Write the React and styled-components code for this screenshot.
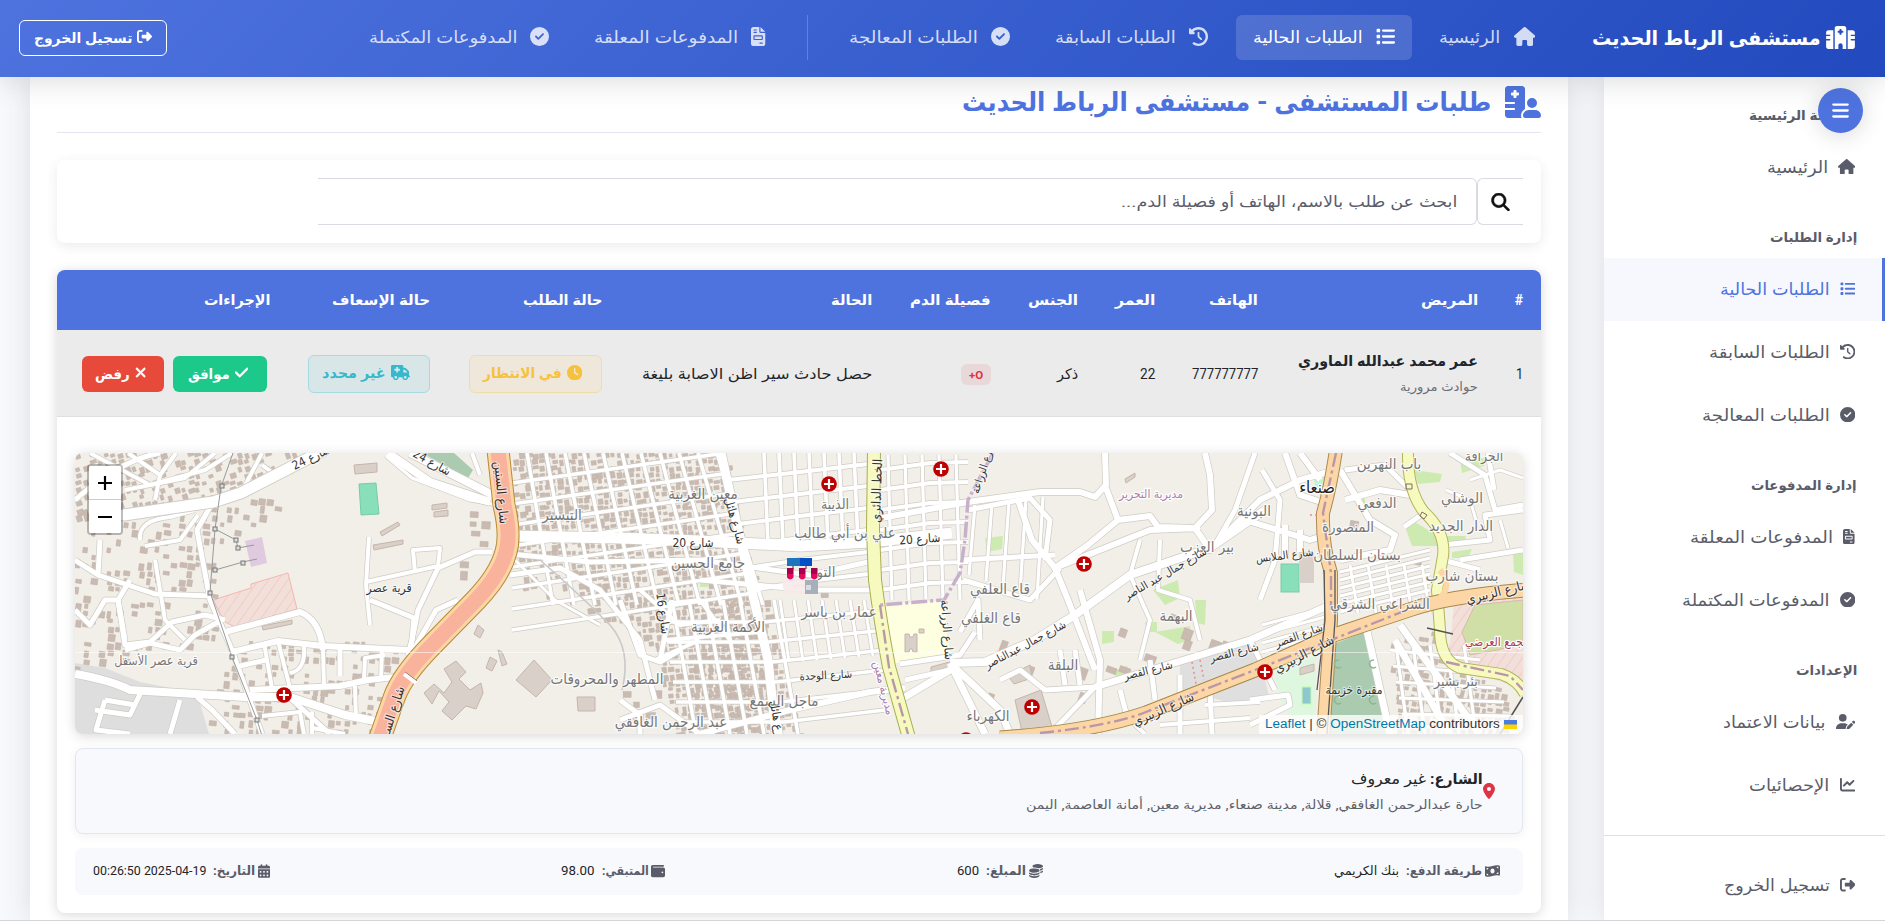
import React, { useLayoutEffect, useRef, useState } from 'react';
import styled, { createGlobalStyle, css } from 'styled-components';
import {
  FaHospital, FaHouse, FaList, FaClockRotateLeft, FaCircleCheck, FaFileInvoice,
  FaRightFromBracket, FaBars, FaHospitalUser, FaMagnifyingGlass, FaClock,
  FaTruckMedical, FaCheck, FaXmark, FaLocationDot, FaMoneyBillWave, FaCoins,
  FaWallet, FaCalendarDays, FaUserPen, FaChartLine,
} from 'react-icons/fa6';

const arabic = "Roboto, 'DejaVu Sans Condensed', 'DejaVu Sans', sans-serif";

const GlobalStyle = createGlobalStyle`
  * { box-sizing: border-box; }
  html, body { margin: 0; padding: 0; }
  body { background: #f8f9fc; font-family: ${arabic}; color: #212529; overflow: hidden; }
  svg { display: block; flex: none; }
`;

/* ---------- text that keeps a given line width ---------- */
const FitBox = styled.span`
  display: inline-block;
  flex: none;
  width: ${(p) => p.$w}px;
  white-space: nowrap;
  text-align: right;
`;
const FitInner = styled.span`
  display: inline-block;
  transform-origin: 100% 50%;
`;
function Fit({ w, children }) {
  const ref = useRef(null);
  const [scale, setScale] = useState(1);
  useLayoutEffect(() => {
    if (ref.current) setScale(w / ref.current.offsetWidth);
  }, [w, children]);
  return (
    <FitBox $w={w}>
      <FitInner ref={ref} style={{ transform: `scaleX(${scale})` }}>{children}</FitInner>
    </FitBox>
  );
}

/* width of each glyph relative to its height */
const ratios = new Map([
  [FaHouse, 1.125], [FaList, 1], [FaClockRotateLeft, 1], [FaCircleCheck, 1],
  [FaFileInvoice, 0.75], [FaUserPen, 1.25], [FaChartLine, 1], [FaRightFromBracket, 1],
  [FaClock, 1], [FaTruckMedical, 1.25], [FaCheck, 0.875], [FaXmark, 0.75],
]);
const Glyph = styled.span`
  flex: none;
  width: ${(p) => p.$size * p.$ratio}px;
  height: ${(p) => p.$size}px;
  margin-bottom: 2px;
  svg { width: 100%; height: 100%; }
`;
const Icon = ({ of: Shape, size }) => (
  <Glyph $size={size} $ratio={ratios.get(Shape)}><Shape /></Glyph>
);

/* ---------- page frame ---------- */
const Page = styled.div`
  direction: rtl;
  display: flex;
  flex-direction: column;
  height: 921px;
  overflow: hidden;
  border-bottom: 1px solid #d3d4d8;
`;
const TopBar = styled.header`
  flex: none;
  height: 77px;
  display: flex;
  align-items: center;
  padding: 0 30px 2px 19px;
  position: relative;
  z-index: 3;
  color: #fff;
  background: linear-gradient(135deg, #4e73df 0%, #224abe 100%);
  box-shadow: 0 4px 28px rgba(58, 59, 69, 0.18);
`;
const Brand = styled.div`
  display: flex;
  align-items: center;
  gap: 5px;
  font-size: 20px;
  font-weight: 700;
  margin-left: 40px;
  svg { width: 29px; height: 23px; }
`;
const Nav = styled.nav`
  display: flex;
  align-items: center;
  gap: 11px;
  flex: 1;
`;
const NavItem = styled.a`
  display: flex;
  align-items: center;
  gap: 13px;
  height: 45px;
  padding: 0 17px;
  border-radius: 6px;
  font-size: 16.5px;
  color: ${(p) => (p.$active ? '#fff' : 'rgba(255,255,255,.8)')};
  background: ${(p) => (p.$active ? 'rgba(255,255,255,.15)' : 'transparent')};
`;
const NavDivider = styled.span`
  width: 1px;
  height: 45px;
  margin: 0 13px;
  background: rgba(255, 255, 255, 0.2);
`;
const LogoutButton = styled.button`
  display: flex;
  align-items: center;
  gap: 5px;
  width: 148px;
  height: 36px;
  padding: 0 14px;
  border: 1px solid #fff;
  border-radius: 6px;
  background: transparent;
  color: #fff;
  font: 700 14px ${arabic};
`;
const Body = styled.div`
  flex: 1;
  min-height: 0;
  display: flex;
`;

/* ---------- sidebar ---------- */
const Sidebar = styled.aside`
  position: relative;
  width: 281px;
  flex: none;
  background: #fff;
  box-shadow: 0 2px 28px rgba(58, 59, 69, 0.15);
`;
const SideHeading = styled.div`
  height: 59px;
  padding: 26px 28px 0 0;
  font-size: 13.5px;
  line-height: 24px;
  font-weight: 700;
  color: #5a5c69;
`;
const SideItem = styled.a`
  display: flex;
  align-items: center;
  gap: 10px;
  height: 63px;
  padding-right: ${(p) => (p.$active ? 27 : 30)}px;
  font-size: 16.5px;
  color: ${(p) => (p.$active ? '#4e73df' : '#5a5c69')};
  background: ${(p) => (p.$active ? '#f6f8fe' : 'transparent')};
  border-right: ${(p) => (p.$active ? '3px solid #4e73df' : '0')};
`;
const SideRule = styled.hr`
  border: 0;
  border-top: 1px solid #dedfe3;
  margin: 18px 0 18px;
`;
const MenuToggle = styled.button`
  position: absolute;
  z-index: 2;
  top: 11px;
  right: 22px;
  width: 45px;
  height: 45px;
  border: 0;
  border-radius: 50%;
  display: flex;
  align-items: center;
  justify-content: center;
  color: #fff;
  background: #4e73df;
  box-shadow: 0 2px 22px rgba(58, 59, 69, 0.2);
  svg { width: 17px; height: 19px; }
`;

/* ---------- main column ---------- */
const Main = styled.main`
  width: 1538px;
  flex: none;
  margin-right: 36px;
  padding: 0 27px;
  background: #fff;
  box-shadow: 0 2px 28px rgba(58, 59, 69, 0.15);
`;
const TitleRow = styled.h1`
  display: flex;
  align-items: center;
  gap: 14px;
  height: 56px;
  margin: 0;
  padding-bottom: 5px;
  border-bottom: 1px solid #e3e6f0;
  color: #4e73df;
  font-size: 26px;
  font-weight: 700;
  svg { width: 36px; height: 32px; }
`;
const SearchCard = styled.section`
  margin-top: 27px;
  height: 83px;
  padding: 18px;
  display: flex;
  border-radius: 8px;
  box-shadow: 0 3px 12px rgba(58, 59, 69, 0.1);
`;
const SearchButton = styled.button`
  width: 46px;
  height: 47px;
  padding: 0 13px 0 0;
  display: flex;
  align-items: center;
  color: #111;
  background: #fff;
  border: 1px solid #d9dbe2;
  border-right: 0;
  border-radius: 6px 0 0 6px;
  svg { width: 19px; height: 18px; stroke: currentColor; stroke-width: 14px; }
`;
const SearchField = styled.div`
  width: 1159px;
  height: 47px;
  padding-right: 19px;
  display: flex;
  align-items: center;
  font-size: 15.5px;
  color: #5a5c69;
  border: 1px solid #d9dbe2;
  border-left: 0;
  border-radius: 0 6px 6px 0;
`;
const TableCard = styled.section`
  margin-top: 27px;
  height: 643px;
  border-radius: 8px;
  overflow: hidden;
  box-shadow: 0 2px 12px rgba(58, 59, 69, 0.2);
`;
const Row = styled.div`
  display: grid;
  grid-template-columns: 45px 220px 103px 77px 87px 119px 270px 172px 160px 231px;
  align-items: center;
  ${(p) => (p.$head ? css`
    height: 60px;
    background: #4e73df;
    color: #fff;
    font-size: 14px;
    font-weight: 700;
  ` : css`
    height: 87px;
    background: #ebebeb;
    border-bottom: 1px solid #dddfe2;
    font-size: 14.5px;
    padding-top: 1px;
  `)}
`;
const Cell = styled.div`
  display: flex;
  align-items: center;
  gap: 9px;
  padding-top: ${(p) => (p.$plain ? 2 : 0)}px;
  padding-right: ${(p) => (p.$inset ? 21 : 18)}px;
`;
const Patient = styled(Cell)`
  flex-direction: column;
  align-items: flex-start;
  gap: 3px;
`;
const PatientName = styled.strong`
  font-size: 15px;
  line-height: 24px;
`;
const PatientKind = styled.span`
  font-size: 12.5px;
  line-height: 22px;
  color: #6c6d75;
`;
const BloodBadge = styled.span`
  width: 30px;
  height: 21px;
  border-radius: 6px;
  display: flex;
  align-items: center;
  justify-content: center;
  font-size: 11.5px;
  font-weight: 700;
  color: #dc3545;
  background: #e9d8da;
`;
const tones = {
  warning: ['#f6c23e', '#eee7da', '#f0dda6'],
  info: ['#36b9cc', '#d9e6e8', '#a4dae2'],
};
const StatusBadge = styled.span`
  width: ${(p) => p.$w}px;
  height: 38px;
  padding-right: 19px;
  display: flex;
  align-items: center;
  gap: 5px;
  border-radius: 6px;
  font-size: 14.5px;
  font-weight: 700;
  color: ${(p) => tones[p.$tone][0]};
  background: ${(p) => tones[p.$tone][1]};
  border: 1px solid ${(p) => tones[p.$tone][2]};
`;
const ActionButton = styled.button`
  width: ${(p) => p.$w}px;
  height: 36px;
  padding: 0 ${(p) => p.$pad}px 0 0;
  display: flex;
  align-items: center;
  gap: 5px;
  border: 0;
  border-radius: 6px;
  color: #fff;
  font: 700 14px ${arabic};
  background: ${(p) => p.$color};
  svg { stroke: currentColor; stroke-width: 16px; }
`;
const Details = styled.div`
  padding: 36px 18px 0;
  display: flex;
  flex-direction: column;
`;
const AddressBox = styled.div`
  margin-top: 14px;
  height: 86px;
  padding: 0 27px 0 0;
  display: flex;
  align-items: center;
  border: 1px solid #e3e6f0;
  border-radius: 8px;
  background: #f8f9fc;
  box-shadow: 0 2px 8px rgba(58, 59, 69, 0.08);
  > svg { width: 12px; height: 16px; color: #dc3545; }
`;
const AddressLines = styled.div`
  display: flex;
  flex-direction: column;
  padding-top: 2px;
`;
const AddressLine = styled.div`
  display: flex;
  gap: 4px;
  font-size: ${(p) => (p.$small ? 12.5 : 15)}px;
  line-height: 25px;
  color: ${(p) => (p.$small ? '#5f6168' : '#212529')};
`;
const InfoBar = styled.div`
  margin-top: 14px;
  height: 47px;
  padding: 0 23px 2px 18px;
  display: flex;
  align-items: center;
  justify-content: space-between;
  border-radius: 8px;
  background: #f8f9fc;
`;
const InfoItem = styled.div`
  display: flex;
  align-items: center;
  gap: 3px;
  font-size: 12.5px;
  > svg { height: 14px; width: ${(p) => p.$icon}px; color: #5a5c69; }
  strong { color: #5a5c69; margin-left: 4px; }
`;

/* ---------- map ---------- */
const MapFrame = styled.div`
  position: relative;
  direction: ltr;
  height: 281px;
  border-radius: 8px;
  overflow: hidden;
  background: #f2efe9;
`;
const MapShadow = styled.div`
  border-radius: 8px;
  box-shadow: 0 2px 12px rgba(58, 59, 69, 0.2);
`;
const ZoomControl = styled.div`
  position: absolute;
  left: 12px;
  top: 11px;
  width: 36px;
  height: 71px;
  display: flex;
  flex-direction: column;
  border: 2px solid rgba(0, 0, 0, 0.25);
  background-clip: padding-box;
  border-radius: 4px;
  overflow: hidden;
`;
const ZoomButton = styled.button`
  flex: 1;
  border: 0;
  padding: 0;
  display: flex;
  align-items: center;
  justify-content: center;
  background: #fff;
  color: #000;
  &:first-child { border-bottom: 1px solid #ccc; }
`;
const Attribution = styled.div`
  position: absolute;
  right: 0;
  bottom: 0;
  height: 19px;
  padding: 0 6px;
  display: flex;
  align-items: center;
  gap: 4px;
  background: rgba(255, 255, 255, 0.8);
  font: 12px/19px 'Liberation Sans', Arial, sans-serif;
  color: #333;
  a { color: #0078a8; }
`;

const rng = (seed) => () => {
  seed = (seed * 16807) % 2147483647;
  return seed / 2147483647;
};
const inside = (x, y, poly) => {
  let hit = false;
  for (let i = 0, j = poly.length - 1; i < poly.length; j = i++) {
    const [xi, yi] = poly[i];
    const [xj, yj] = poly[j];
    if (yi > y !== yj > y && x < ((xj - xi) * (y - yi)) / (yj - yi) + xi) hit = !hit;
  }
  return hit;
};
/* [polygon, density, step, tilt] */
const districts = [
  [[[75, 453], [300, 453], [215, 497], [75, 520]], 0.72, 7, -18],
  [[[75, 525], [215, 507], [270, 490], [284, 500], [225, 545], [215, 600], [225, 640], [75, 668]], 0.42, 8, 8],
  [[[235, 640], [400, 642], [372, 734], [200, 734]], 0.45, 8, 6],
  [[[512, 453], [724, 453], [760, 605], [778, 734], [675, 734], [655, 650], [610, 600], [560, 570], [514, 560]], 0.95, 6.5, -8],
  [[[560, 570], [514, 560], [520, 585], [590, 612], [640, 640], [640, 590]], 0.5, 8, -8],
  [[[700, 600], [768, 600], [800, 734], [680, 734]], 0.85, 7, -5],
  [[[465, 500], [495, 510], [495, 550], [440, 590], [455, 540]], 0.25, 10, 3],
  [[[1390, 640], [1438, 630], [1450, 670], [1500, 685], [1518, 734], [1395, 734]], 0.8, 7, 10],
  [[[960, 620], [1250, 600], [1260, 655], [1000, 720], [950, 700]], 0.07, 13, 20],
  [[[760, 460], [865, 460], [868, 600], [780, 600]], 0.03, 12, 0],
  [[[620, 690], [672, 690], [680, 734], [600, 734]], 0.25, 11, 0],
  [[[1350, 455], [1520, 455], [1520, 580], [1350, 600]], 0.02, 13, 10],
];
const buildings = districts.flatMap(([poly, density, step, tilt], k) => {
  const r = rng(97 + k * 131);
  const xs = poly.map((p) => p[0]);
  const ys = poly.map((p) => p[1]);
  const out = [];
  for (let y = Math.min(...ys); y < Math.max(...ys); y += step) {
    for (let x = Math.min(...xs); x < Math.max(...xs); x += step) {
      const px = x + r() * 2;
      const py = y + r() * 2;
      const keep = r() < density;
      const w = step * (0.4 + r() * 0.5);
      const h = step * (0.4 + r() * 0.5);
      if (keep && inside(px, py, poly)) out.push([px, py, w, h, tilt]);
    }
  }
  return out;
});

const streets = [];
const addStreet = (d, w = 4) => streets.push([d, w]);
for (let i = 0; i < 11; i++) addStreet(`M${527 + i * 19},453 l${26 + i * 2},152`, 3.6);
for (let i = 0; i < 7; i++) addStreet(`M${672 + i * 17},600 l24,134`, 3.6);
for (let i = 0; i < 8; i++) addStreet(`M512,${483 + i * 21} L${725 + i * 4},${453 + i * 20}`, 3.6);
for (let i = 0; i < 6; i++) addStreet(`M${664 + i * 3},${622 + i * 20} L${764 + i * 4},${622 + i * 20} L885,${610 + i * 20}`, 3.6);
for (let i = 0; i < 7; i++) addStreet(`M${764 + i * 15},453 l4,90`, 3.6);
for (let i = 0; i < 8; i++) addStreet(`M${780 + i * 14},600 l9,${62 - i}`, 3);
for (let i = 0; i < 6; i++) addStreet(`M${728 + i * 5},${480 + i * 22} L800,${472 + i * 22} L868,${464 + i * 22}`, 4);
for (let i = 0; i < 7; i++) addStreet(`M880,${470 + i * 20} L930,${463 + i * 20} L968,${462 + i * 20}`, 4);
for (let i = 0; i < 5; i++) addStreet(`M${888 + i * 17},455 l4,145`, 3.2);
for (let i = 0; i < 5; i++) addStreet(`M${975 + i * 17},${505 - i * 2} l-6,${70 + i * 8}`, 3.2);
for (let i = 0; i < 6; i++) addStreet(`M${1340},${612 - i * 8} L1430,${590 - i * 8}`, 3);
for (let i = 0; i < 5; i++) addStreet(`M${1350 + i * 18},565 l8,48`, 3);
for (let i = 0; i < 5; i++) addStreet(`M1262,${625 + i * 9} L1325,${608 + i * 9}`, 3);
for (let i = 0; i < 5; i++) addStreet(`M${1390 + i * 3},${650 + i * 16} L${1480 + i * 8},${660 + i * 14}`, 3.2);
for (let i = 0; i < 5; i++) addStreet(`M${1396 + i * 17},645 l12,89`, 3.2);
[
  ['M75,500 Q120,460 160,453', 5], ['M90,453 L150,485 L205,470 L232,453', 4],
  ['M128,453 L160,475 L155,500', 4], ['M176,453 L160,475 M125,490 L185,478 L215,453', 4],
  ['M213,502 L197,530 L210,600 L232,650 L262,734', 5], ['M241,493 L262,453 M262,465 L280,478', 4],
  ['M140,540 Q138,520 170,517 L195,510 M145,546 L180,540 L198,515', 4],
  ['M75,560 L98,575 L100,540 M98,575 L155,594 L212,596', 5],
  ['M130,580 L118,600 L125,640 M75,610 L90,625 L105,600 L118,600', 5],
  ['M118,600 L125,645 L150,642 L172,622 L205,615 L225,620', 5],
  ['M125,650 L150,643 L180,650 L195,635 L218,622', 5], ['M155,560 L165,620 L185,640', 4],
  ['M225,632 L300,612 Q320,620 323,650', 6], ['M232,652 L278,641 L323,646 L410,650', 6],
  ['M75,674 Q110,680 130,690 L245,697 L290,697 L345,715 L375,721', 8],
  ['M250,690 L340,686 L368,680 L395,677', 6], ['M264,643 L272,688 M278,641 L290,688 M304,646 Q306,670 290,673', 4],
  ['M323,648 L324,688 M355,686 L356,720 M364,680 L365,658 L385,655 M382,650 L381,678', 4],
  ['M240,666 L266,660 M340,646 V676 M290,698 L330,734 M197,697 L212,710 L235,734', 5],
  ['M105,700 L96,730 L130,734 M105,700 L135,705 M142,690 L130,715 L95,710 M180,700 L170,734', 5],
  ['M262,716 L300,712 L304,734 M312,712 V734 M312,728 L345,734', 4],
  ['M388,453 L430,482 L490,502 M410,453 L495,496', 8], ['M386,456 L412,478 L470,500 L492,504', 3],
  ['M369,537 L366,585 L370,625 M366,582 L438,566 L440,548 L413,550 L415,572', 4],
  ['M438,568 L475,552 L492,552 M438,568 L418,610 L410,650', 5], ['M370,600 L414,618 L412,640 L408,655', 5],
  ['M458,600 L436,610 L408,660', 5], ['M472,453 L480,475', 4],
  ['M511,536 L620,538 L700,541 L800,546 L870,542 L952,533', 11],
  ['M511,554 L590,562 L700,560', 5], ['M721,453 L736,520 L754,600 L768,660 L776,734', 9],
  ['M700,560 L810,575 L868,562', 5], ['M700,580 L810,590 L870,590', 5],
  ['M510,575 L560,568 L600,590 L640,640 L655,700', 5], ['M515,560 L555,600 L600,625', 3],
  ['M640,590 L680,625 L720,620 M655,605 L700,600 L730,640 M665,640 L760,632 M655,660 L700,640', 4],
  ['M620,600 L640,655 L660,662 L680,650 M672,600 L660,660', 5],
  ['M620,700 L640,715 L640,734 M620,720 L660,705 L700,734', 5], ['M700,734 L790,710 L870,692 L905,688', 6],
  ['M870,520 L968,502 L1040,492 L1080,492 L1095,497 L1106,485 L1105,453', 6],
  ['M968,510 L1030,498 L1050,520 L1045,560', 5], ['M1106,488 L1118,520 L1088,545 L1055,568 L1032,540 L1018,500', 6],
  ['M1118,520 L1150,516 L1158,527 L1195,528 L1212,510 L1210,475 L1205,453', 6],
  ['M1055,568 L1150,530 L1200,528 M1195,528 L1210,550 L1260,500 L1300,480 L1335,470', 6],
  ['M960,560 L1055,555 M963,580 L1030,600 L1060,568', 5],
  ['M950,663 L985,662 L1035,640 L1075,615 L1130,575 L1210,548 L1265,510', 8],
  ['M1055,568 L1068,600 L1095,670 M1080,590 L1100,660 L1098,734', 6], ['M1095,687 L1250,640 L1330,605', 7],
  ['M1140,540 L1130,575 L1150,620 L1140,660 M1160,540 L1158,590 L1190,600 L1200,640', 4],
  ['M950,663 L985,734 M950,663 L1000,710 L1010,734 M900,700 L950,670', 7],
  ['M900,664 L960,655 L975,632 M905,680 L950,670 M960,632 L978,600 L980,640', 5],
  ['M1095,687 L1045,690 L1020,670 L1000,680 M1060,650 L1065,685 M1075,650 L1080,685', 5],
  ['M1095,687 L1050,734 M1120,690 L1128,720 M1180,675 L1180,734 M1210,690 L1212,734 M1150,660 L1155,700', 5],
  ['M1130,720 L1145,734 M1160,725 L1250,718 M1205,705 L1260,702', 4],
  ['M1255,453 L1235,510 L1215,545 M1262,470 L1280,500 L1275,560 L1260,600', 5],
  ['M1285,453 L1300,495 L1330,505 M1300,453 L1320,480 M1245,520 L1310,540 L1325,535 M1285,525 V560 M1300,530 V552', 6],
  ['M1340,470 L1370,520 L1395,535 L1390,550 L1340,560 M1345,500 L1380,490 L1410,495', 6],
  ['M1410,490 L1385,465 L1345,470 M1424,513 L1404,527 M1443,545 L1490,540 L1485,515 L1523,510', 5],
  ['M1450,453 L1485,475 L1495,510 L1523,505 M1488,453 L1494,490 M1460,560 L1523,550 M1443,560 L1480,570', 5],
  ['M1470,480 L1500,470 L1523,478 M1500,520 L1508,548 M1446,490 L1470,500 L1476,520', 3],
  ['M1367,631 L1390,734 M1400,625 L1480,734 M1395,640 L1450,734', 7],
  ['M1250,725 L1290,705 L1288,695 L1250,700 M1250,640 L1275,690', 5],
].forEach(([d, w]) => addStreet(d, w));

const labels = [
  [703, 499, 'معين الغربية', 15, 0], [835, 509, 'الذيبة', 14, 0], [845, 538, 'علي بن أبي طالب', 15, 0],
  [562, 520, 'التيسير', 15, 0], [708, 568, 'جامع الحسين', 15, 0], [826, 577, 'التو', 15, 0],
  [1000, 594, 'قاع العلفي', 15, 0], [991, 623, 'قاع الغلفي', 15, 0], [839, 617, 'عمار بن ياسر', 15, 0],
  [728, 632, 'الأكمة الغربية', 15, 0], [607, 684, 'المطهر والمحروقات', 15, 0], [784, 706, 'ماجل السمع', 15, 0],
  [671, 727, 'عبد الرحمن الغافقي', 15, 0], [1063, 670, 'البلقة', 15, 0], [988, 721, 'الكهرباء', 15, 0],
  [1176, 621, 'البهمة', 15, 0], [1207, 552, 'بير العزب', 15, 0], [1254, 516, 'البونية', 15, 0],
  [1389, 469, 'باب النهرين', 15, 0], [1484, 461, 'الجرافة', 14, 0], [1377, 508, 'الدفعي', 15, 0],
  [1462, 503, 'الوشلي', 15, 0], [1348, 532, 'المنصورة', 15, 0], [1461, 531, 'الدار الجديد', 15, 0],
  [1357, 560, 'بستان السلطان', 15, 0], [1462, 581, 'بستان شارب', 15, 0], [1380, 609, 'الشراعي الشرقي', 15, 0],
  [1456, 686, 'بئر بشير', 14, 0], [156, 665, 'قرية عصر الأسفل', 12.5, 0],
];
const streetNames = [
  [313, 461, 'شارع 24', 12, -26], [430, 466, 'شارع 24', 12, 29], [497, 493, 'شارع الستين', 13, 85],
  [397, 712, 'شارع السـ', 13, -72], [389, 592, 'قرية عصر', 12, 0], [731, 522, 'شارع هائل', 12, 74],
  [693, 547, 'شارع 20', 12, 0], [920, 543, 'شارع 20', 12, -4], [881, 491, 'الخط الدائري', 13, -88],
  [987, 468, 'شارع الزراعة', 11, -72], [943, 630, 'شارع الزراعة', 12, 86], [659, 614, 'شارع 16', 12, 82],
  [826, 679, 'شارع الوحدة', 11, -3], [774, 725, 'شارع هائل', 12, 80], [1027, 648, 'شارع جمال عبدالناصر', 11, -28],
  [1167, 577, 'شارع جمال عبد الناصر', 11, -30], [1285, 559, 'شارع الملابس', 11, -7], [1149, 674, 'شارع القصر', 11, -14],
  [1235, 656, 'شارع القصر', 11, -14], [1300, 639, 'شارع القصر', 11, -20], [1165, 713, 'شارع الزبيري', 13, -24],
  [1306, 658, 'شارع الزبيري', 13, -28], [1499, 596, 'شارع الزبيري', 13, -14], [1354, 694, 'مقبرة خزيمة', 12, 0],
];
const hospitals = [[829, 484], [941, 469], [1084, 564], [1032, 707], [284, 695], [1265, 672], [966, 740]];

const highway = 'M498,450 L504,505 Q511,535 506,552 Q500,575 476,600 L434,643 Q402,675 394,698 L380,738';
const ringRoad = 'M874,450 L873,530 L875,580 Q880,620 889,667 L909,738';
const eastRoad = 'M1408,450 Q1407,490 1424,512 Q1446,532 1443,556 L1437,590 L1440,630 Q1440,660 1460,668 L1501,674 Q1518,680 1525,694';
const saada = 'M1336,450 Q1330,490 1323,513 Q1322,545 1331,573 L1331,620 L1323,738';
const zubairi = 'M1000,738 Q1090,732 1146,713 L1255,670 L1331,636 L1412,609 Q1450,596 1526,590';

function MapLabel({ item, fill, halo }) {
  const [x, y, text, size, angle] = item;
  return (
    <text
      x={x} y={y} fontSize={size} fill={fill} stroke={halo} strokeWidth="2.4" paintOrder="stroke"
      strokeLinejoin="round" textAnchor="middle" direction="rtl"
      transform={`rotate(${angle} ${x} ${y})`}
    >
      {text}
    </text>
  );
}

function CityMap() {
  return (
    <svg width="1448" height="281" viewBox="75 453 1448 281" fontFamily="'DejaVu Sans Condensed', 'DejaVu Sans', sans-serif">
      <defs>
        <pattern id="hatch" width="8" height="8" patternUnits="userSpaceOnUse" patternTransform="rotate(35)">
          <rect width="8" height="8" fill="#f3dfd9" />
          <path d="M0 0V8" stroke="#efc9c2" strokeWidth="1.6" />
        </pattern>
      </defs>
      <rect x="75" y="453" width="1448" height="281" fill="#f2efe9" />
      <path d="M75,663 L105,668 L140,682 L197,693 L209,734 H75Z" fill="#dedede" />
      <path d="M1180,663 L1255,640 L1270,700 L1240,705 L1180,690Z" fill="#dfdfdf" />
      <path d="M213,600 L251,588 L251,584 L288,573 L297,609 L235,627 L225,622Z" fill="url(#hatch)" stroke="#f5b5ae" />
      <path d="M245,541 L262,537 L267,563 L251,567Z" fill="#e0cae0" />
      <path d="M359,484 L376,483 L379,514 L361,515Z" fill="#8adfbb" stroke="#78cba6" />
      <path d="M422,453 H454 L473,470 L468,478Z" fill="#aacbaf" />
      <path d="M884,604 L944,601 L950,659 L896,663Z" fill="#feffe0" />
      <path d="M1455,595 L1523,592 V690 L1448,662Z" fill="url(#hatch)" />
      <path d="M1475,605 L1523,600 V645 L1470,655 L1462,632Z" fill="#cfdfa6" stroke="#d9b8a9" />
      <path d="M1367,631 L1331,645 L1325,734 H1390Z" fill="#aacbaf" />
      <path d="M1274,668 L1316,655 L1316,734 H1300 L1280,700Z" fill="#dff6df" />
      <rect x="1302" y="687" width="9" height="17" fill="#91c6cf" stroke="#bfa" />
      <rect x="1281" y="564" width="18" height="28" fill="#8adfbb" stroke="#78cba6" />
      <rect x="1299" y="552" width="15" height="31" fill="#d9d0c9" />
      <path d="M1324,473 l-10,7 l2,12 l8,4z" fill="#bff5cf" />
      <g fill="#cdebb0">
        <path d="M1404,524 L1415,522 L1438,536 L1438,546 H1412Z" />
        <path d="M1414,470 L1442,474 L1440,482 L1418,484Z M1460,460 L1485,458 L1484,466 L1462,473Z" />
        <path d="M1452,552 L1472,549 L1468,558 H1452Z M1513,553 H1523 V575 L1514,572Z M1355,498 h10 v12 l-9,-4z" />
        <path d="M985,538 L1003,536 L1002,549 L987,552Z M1153,590 L1178,580 L1180,598 L1165,605Z" />
        <path d="M1102,631 h12 v11 l-12,2z M1195,600 h11 l-1,25 l-8,-2z M1155,632 L1190,626 L1191,640 L1178,644Z M1145,622 h12 v10 h-10z" />
        <path d="M1112,672 l15,-6 l2,9 l-12,3z M700,582 h8 v5 h-8z M1440,536 h26 l-2,9 h-22z" />
      </g>
      <g fill="#c9bbb1" stroke="#bfb0a5" strokeWidth=".5">
        {buildings.map(([x, y, w, h, a], i) => (
          <rect key={i} x={x} y={y} width={w} height={h} transform={`rotate(${a} ${x} ${y})`} />
        ))}
      </g>
      <g fill="#d9d0c9" stroke="#c6b5ab">
        <path d="M354,465 L377,463 V472 L355,474Z M432,505 l15,-2 v5 l-15,2z M434,512 l14,-2 v6 l-14,1z" />
        <path d="M373,545 l30,-5 v4 l-29,6z M380,532 l18,-10 l2,3 l-18,11z M262,626 l30,-6 v4 l-29,6z" />
        <path d="M516,680 L534,660 L552,680 L536,697Z" />
        <path d="M444,669 L456,661 L466,672 L459,679 L470,690 L481,683 L483,693 L476,709 L466,706 L452,720 L442,711 L449,702 L439,691 L432,704 L424,693 L434,684 L444,693 L452,682Z" />
        <path d="M1015,700 L1041,690 L1052,727 L1022,732Z M1008,676 l22,-11 l2,13 l-18,6z M931,667 l22,-6 v5 l-22,6z" />
        <path d="M905,634 h4 l1,3 h3 l1,-3 h3 v18 h-4 l-1,-3 h-2 l-1,3 h-4z M919,629 h5 v4 h-5z M1300,668 l14,-4 v7 l-14,4z M1125,479 l10,-6 v4 l-9,6z M577,697 h18 v14 h-17z" />
        <path d="M490,657 l7,4 l-5,10 l-6,-3z M478,625 l6,5 l-4,8 l-6,-4z M498,650 l4,2 l5,12 l-5,2z" />
      </g>
      <g fill="none" stroke="#cfccc6" strokeLinejoin="round">
        {streets.map(([d, w], i) => <path key={i} d={d} strokeWidth={w + 1.4} />)}
      </g>
      <g fill="none" stroke="#fff" strokeLinejoin="round">
        {streets.map(([d, w], i) => <path key={i} d={d} strokeWidth={w} />)}
      </g>
      <g fill="none" stroke="#cfccc6" strokeLinecap="round">
        <path d="M124,515 L213,502 L241,493 L305,460 L324,450" strokeWidth="13" />
        <path d="M124,515 L213,502 L241,493 L305,460 L324,450" strokeWidth="11" stroke="#fff" />
      </g>
      <path d="M540,560 Q575,590 610,625 Q632,650 622,690" fill="none" stroke="#c9c9c9" strokeWidth="1.6" />
      <path d="M234,450 L221,487 L215,529 L210,592 L232,657 L257,720 L262,736 M215,529 L236,540 L238,548 L254,545 M215,570 L243,562 L257,559" fill="none" stroke="#999" />
      <g fill="#ddd" stroke="#777">
        {[[222, 486], [215, 529], [236, 540], [238, 548], [243, 563], [215, 570], [210, 593], [232, 657], [257, 720]].map(([x, y]) => (
          <rect key={`${x}-${y}`} x={x - 2} y={y - 2} width="4" height="4" />
        ))}
      </g>
      <g fill="none">
        <path d={ringRoad} stroke="#a9ad52" strokeWidth="14" />
        <path d={ringRoad} stroke="#f7fabf" strokeWidth="12" />
        <path d={eastRoad} stroke="#b2b55c" strokeWidth="12" />
        <path d={eastRoad} stroke="#f7fabf" strokeWidth="10" />
        <path d={saada} stroke="#aa8a55" strokeWidth="14" />
        <path d={zubairi} stroke="#a5884a" strokeWidth="15" />
        <path d="M1435,602 Q1455,588 1440,570" stroke="#fcd6a4" strokeWidth="6" />
        <path d={saada} stroke="#fcd6a4" strokeWidth="12" />
        <path d={zubairi} stroke="#fcd6a4" strokeWidth="13" />
        <path d="M1335,570 V620 L1327,734 M1324,570 L1325,620 L1317,690" stroke="#555" strokeWidth="1.3" />
        <path d={highway} stroke="#b88a37" strokeWidth="23" />
        <path d={highway} stroke="#fcd6a4" strokeWidth="21" />
        <path d={highway} stroke="#f9b29c" strokeWidth="15" />
        <path d="M993,453 L968,500 L965,540 L960,573 L944,600 L879,605" stroke="#c8b0cb" strokeWidth="3.5" strokeDasharray="16 3 3 3" />
        <path d="M880,605 L889,667 L908,734 M1336,453 L1323,513 L1331,573 V610 M1040,733 Q1110,726 1146,712 L1255,670 L1412,608 M1446,662 L1510,676 L1523,690" stroke="#b997a8" strokeWidth="2.4" strokeDasharray="14 4 3 4" />
        <path d="M1192,662 l4,22 M1200,660 l4,20 M1310,515 h10" stroke="#f28b82" strokeDasharray="2 3" strokeWidth="1.5" />
        <path d="M1427,628 L1453,634 M1500,734 L1523,697" stroke="#555" strokeWidth="1.6" />
        <path d="M405,672 l12,9 M1406,484 h6 v5 h-6z M1422,512 l5,3 l-3,4 l-4,-3z" stroke="#806b65" />
        <path d="M404,674 l12,9" stroke="#fff" strokeWidth="4" />
        <path d="M75,652.5 H1523" stroke="#fff" strokeWidth="1" opacity=".55" />
      </g>
      {labels.map((l, i) => <MapLabel key={i} item={l} fill="#777" halo="rgba(255,255,255,.75)" />)}
      {streetNames.map((l, i) => <MapLabel key={i} item={l} fill="#333" halo="rgba(255,255,255,.5)" />)}
      <MapLabel item={[1151, 498, 'مديرية التحرير', 12, 0]} fill="#ac7fac" halo="#fff" />
      <MapLabel item={[880, 689, 'مديرية معين', 12, 76]} fill="#ac7fac" halo="#fff" />
      <MapLabel item={[1317, 493, 'صنعاء', 16.5, 0]} fill="#222" halo="#fff" />
      <MapLabel item={[1497, 646, 'مجمع العرضي', 12, 0]} fill="#aa3c55" halo="#fff" />
      <g fill="none" stroke="#8bb795" strokeWidth="1.5">
        {[[1339, 664], [1374, 664], [1339, 700], [1374, 700]].map(([x, y]) => (
          <path key={`${x}-${y}`} d={`M${x},${y - 4} a4,4 0 1 0 2,7`} />
        ))}
      </g>
      {hospitals.map(([x, y]) => (
        <g key={`${x}-${y}`} transform={`translate(${x} ${y})`}>
          <circle r="7.8" fill="#bf0000" />
          <path d="M-5 0H5M0-5V5" stroke="#fff" strokeWidth="2.2" />
        </g>
      ))}
      <g>
        <path d="M782,579 H818 V594 H784Z" fill="#f6e9ea" opacity=".9" />
        <path d="M805,580 h13 v14 h-13z" fill="#a6afba" />
        <path d="M806,585 h5 v5 h-5z" fill="#d7dde5" />
        <path d="M787,558 h13 v8 h-13z" fill="#1e74bd" />
        <path d="M800,558 h12 v8 h-12z" fill="#0450c4" />
        <path d="M793,566v3M806,566v3" stroke="#333" />
        {[787, 799, 811].map((x) => (
          <g key={x}>
            <path d={`M${x},568 h6.5 v6 h-6.5z`} fill="#a6004b" />
            <path d={`M${x},574 h6.5 v3.5 q-3.2,4 -6.5,0z`} fill="#e4085e" />
          </g>
        ))}
      </g>
    </svg>
  );
}

/* ---------- content ---------- */
const navLeft = [
  [FaHouse, 'الرئيسية', 61], [FaList, 'الطلبات الحالية', 110, true],
  [FaClockRotateLeft, 'الطلبات السابقة', 121], [FaCircleCheck, 'الطلبات المعالجة', 129],
];
const navRight = [[FaFileInvoice, 'المدفوعات المعلقة', 144], [FaCircleCheck, 'المدفوعات المكتملة', 149]];
const sideGroups = [
  ['القائمة الرئيسية', 108, [[FaHouse, 'الرئيسية', 61]]],
  ['إدارة الطلبات', 87, [
    [FaList, 'الطلبات الحالية', 110, true],
    [FaClockRotateLeft, 'الطلبات السابقة', 121],
    [FaCircleCheck, 'الطلبات المعالجة', 128],
  ]],
  ['إدارة المدفوعات', 106, [[FaFileInvoice, 'المدفوعات المعلقة', 143], [FaCircleCheck, 'المدفوعات المكتملة', 148]]],
  ['الإعدادات', 61, [[FaUserPen, 'بيانات الاعتماد', 103], [FaChartLine, 'الإحصائيات', 80]]],
];
const columns = [
  ['#', 8], ['المريض', 57], ['الهاتف', 49], ['العمر', 40], ['الجنس', 50], ['فصيلة الدم', 81],
  ['الحالة', 41], ['حالة الطلب', 79], ['حالة الإسعاف', 98], ['الإجراءات', 66],
];
const payment = [
  [FaMoneyBillWave, 15, 'طريقة الدفع:', 76, 'بنك الكريمي', 65],
  [FaCoins, 14, 'المبلغ:', 40, '600', 22],
  [FaWallet, 14, 'المتبقي:', 47, '98.00', 33],
  [FaCalendarDays, 12, 'التاريخ:', 42, '2025-04-19 00:26:50', 113],
];
const NavLinks = ({ items }) => items.map(([shape, text, w, active]) => (
  <NavItem key={text} $active={active}><Icon of={shape} size={19} /><Fit w={w}>{text}</Fit></NavItem>
));

export default function App() {
  return (
    <Page>
      <GlobalStyle />
      <TopBar>
        <Brand><FaHospital /><Fit w={229}>مستشفى الرباط الحديث</Fit></Brand>
        <Nav>
          <NavLinks items={navLeft} />
          <NavDivider />
          <NavLinks items={navRight} />
        </Nav>
        <LogoutButton><Icon of={FaRightFromBracket} size={15} /><Fit w={98}>تسجيل الخروج</Fit></LogoutButton>
      </TopBar>
      <Body>
        <Sidebar>
          <MenuToggle><FaBars /></MenuToggle>
          {sideGroups.map(([title, w, items]) => (
            <React.Fragment key={title}>
              <SideHeading><Fit w={w}>{title}</Fit></SideHeading>
              {items.map(([shape, text, tw, active]) => (
                <SideItem key={text} $active={active}><Icon of={shape} size={15.4} /><Fit w={tw}>{text}</Fit></SideItem>
              ))}
            </React.Fragment>
          ))}
          <SideRule />
          <SideItem><Icon of={FaRightFromBracket} size={15.4} /><Fit w={106}>تسجيل الخروج</Fit></SideItem>
        </Sidebar>
        <Main>
          <TitleRow><FaHospitalUser /><Fit w={529}>طلبات المستشفى - مستشفى الرباط الحديث</Fit></TitleRow>
          <SearchCard>
            <SearchButton><FaMagnifyingGlass /></SearchButton>
            <SearchField><Fit w={336}>ابحث عن طلب بالاسم، الهاتف أو فصيلة الدم...</Fit></SearchField>
          </SearchCard>
          <TableCard>
            <Row $head>
              {columns.map(([text, w]) => <Cell key={text}><Fit w={w}>{text}</Fit></Cell>)}
            </Row>
            <Row>
              <Cell $plain><Fit w={7}>1</Fit></Cell>
              <Patient>
                <PatientName><Fit w={180}>عمر محمد عبدالله الماوري</Fit></PatientName>
                <PatientKind><Fit w={78}>حوادث مرورية</Fit></PatientKind>
              </Patient>
              <Cell $plain><Fit w={66}>777777777</Fit></Cell>
              <Cell $plain><Fit w={15}>22</Fit></Cell>
              <Cell $plain><Fit w={21}>ذكر</Fit></Cell>
              <Cell $plain><BloodBadge>O+</BloodBadge></Cell>
              <Cell $plain><Fit w={230}>حصل حادث سير اظن الاصابة بليغة</Fit></Cell>
              <Cell><StatusBadge $tone="warning" $w={133}><Icon of={FaClock} size={15.4} /><Fit w={79}>في الانتظار</Fit></StatusBadge></Cell>
              <Cell><StatusBadge $tone="info" $w={122}><Icon of={FaTruckMedical} size={15.2} /><Fit w={64}>غير محدد</Fit></StatusBadge></Cell>
              <Cell $inset>
                <ActionButton $w={94} $pad={19} $color="#1cc88a"><Icon of={FaCheck} size={15} /><Fit w={42}>موافق</Fit></ActionButton>
                <ActionButton $w={82} $pad={18} $color="#e74a3b"><Icon of={FaXmark} size={15} /><Fit w={35}>رفض</Fit></ActionButton>
              </Cell>
            </Row>
            <Details>
              <MapShadow>
                <MapFrame>
                  <CityMap />
                  <ZoomControl>
                    <ZoomButton aria-label="+"><svg width="16" height="16" viewBox="0 0 16 16"><path d="M1 8H15M8 1V15" stroke="#000" strokeWidth="2.2" /></svg></ZoomButton>
                    <ZoomButton aria-label="−"><svg width="16" height="16" viewBox="0 0 16 16"><path d="M1 8H15" stroke="#000" strokeWidth="2.2" /></svg></ZoomButton>
                  </ZoomControl>
                  <Attribution>
                    <Fit w={235}><a>Leaflet</a> | © <a>OpenStreetMap</a> contributors</Fit>
                    <svg width="13" height="9" viewBox="0 0 13 9"><path fill="#4c7be1" d="M0 0h13v9H0z" /><path fill="#ffd500" d="M0 4.5h13V9H0z" /></svg>
                  </Attribution>
                </MapFrame>
              </MapShadow>
              <AddressBox>
                <FaLocationDot />
                <AddressLines>
                  <AddressLine><strong><Fit w={53}>الشارع:</Fit></strong><Fit w={75}>غير معروف</Fit></AddressLine>
                  <AddressLine $small><Fit w={457}>حارة عبدالرحمن الغافقي, قلالة, مدينة صنعاء, مديرية معين, أمانة العاصمة, اليمن</Fit></AddressLine>
                </AddressLines>
              </AddressBox>
              <InfoBar>
                {payment.map(([Shape, size, label, lw, value, vw]) => (
                  <InfoItem key={label} $icon={size}>
                    <Shape /><strong><Fit w={lw}>{label}</Fit></strong><Fit w={vw}>{value}</Fit>
                  </InfoItem>
                ))}
              </InfoBar>
            </Details>
          </TableCard>
        </Main>
      </Body>
    </Page>
  );
}
